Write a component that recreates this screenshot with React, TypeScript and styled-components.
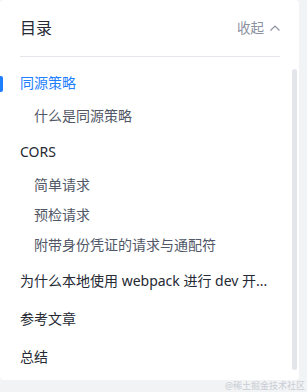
import styled, { createGlobalStyle } from "styled-components";

type CatalogItem = {
  title: string;
  active?: boolean;
  children?: string[];
};

const catalog: CatalogItem[] = [
  { title: "同源策略", active: true, children: ["什么是同源策略"] },
  {
    title: "CORS",
    children: ["简单请求", "预检请求", "附带身份凭证的请求与通配符"],
  },
  { title: "为什么本地使用 webpack 进行 dev 开..." },
  { title: "参考文章" },
  { title: "总结" },
];

const App = () => {
  return (
    <Page>
      <GlobalStyle />
      <Card>
        <Header>
          <Title>目录</Title>
          <Collapse>
            收起
            <svg width="10" height="6" viewBox="0 0 10 6" fill="none">
              <polyline
                points="0.5,5.5 5,1 9.5,5.5"
                stroke="#8a919f"
                strokeWidth="1.1"
              />
            </svg>
          </Collapse>
        </Header>
        <Body>
          <List>
            {catalog.map((item) => (
              <Item key={item.title}>
                <ItemTitle $active={item.active}>{item.title}</ItemTitle>
                {item.children && (
                  <SubList>
                    {item.children.map((child) => (
                      <SubItem key={child}>{child}</SubItem>
                    ))}
                  </SubList>
                )}
              </Item>
            ))}
          </List>
          <ScrollTrack>
            <ScrollThumb />
          </ScrollTrack>
        </Body>
      </Card>
      <Watermark>@稀土掘金技术社区</Watermark>
    </Page>
  );
};

const GlobalStyle = createGlobalStyle`
  html, body {
    margin: 0;
    padding: 0;
    background: #f2f3f5;
  }
  * {
    box-sizing: border-box;
  }
`;

const Page = styled.div`
  position: relative;
  width: 307px;
  height: 392px;
  background: #f2f3f5;
  font-family: "Noto Sans", "Noto Sans CJK SC", sans-serif;
  overflow: hidden;
`;

const Card = styled.div`
  width: 299px;
  height: 380px;
  background: #fff;
  border-radius: 4px;
  display: flex;
  flex-direction: column;
`;

const Header = styled.div`
  display: flex;
  justify-content: space-between;
  align-items: center;
  margin: 0 19px 0 20px;
  padding: 12px 0;
  border-bottom: 1px solid #e4e6eb;
`;

const Title = styled.div`
  font-size: 16px;
  line-height: 32px;
  color: #252933;
`;

const Collapse = styled.div`
  display: flex;
  align-items: center;
  gap: 6px;
  font-size: 13.5px;
  line-height: 32px;
  color: #8a919f;
`;

const Body = styled.div`
  flex: 1;
  display: flex;
  min-height: 0;
`;

const List = styled.ul`
  flex: 1;
  min-width: 0;
  list-style: none;
  margin: 0;
  padding: 7px 8px 0 0;
`;

const Item = styled.li`
  margin: 0;
`;

const ItemTitle = styled.div<{ $active?: boolean }>`
  position: relative;
  padding: 8px 0 8px 20px;
  font-size: 14px;
  line-height: 22px;
  color: ${(p) => (p.$active ? "#1e80ff" : "#252933")};
  white-space: nowrap;
  overflow: hidden;
  text-overflow: ellipsis;

  &::before {
    content: "";
    display: ${(p) => (p.$active ? "block" : "none")};
    position: absolute;
    left: 0;
    top: 12px;
    width: 3px;
    height: 16px;
    background: #1e80ff;
    border-radius: 0 2px 2px 0;
  }
`;

const SubList = styled.ul`
  list-style: none;
  margin: -1px 0 2px;
  padding: 0;
`;

const SubItem = styled.li`
  padding: 4px 0 4px 34px;
  font-size: 14px;
  line-height: 22px;
  color: #515767;
  white-space: nowrap;
  overflow: hidden;
  text-overflow: ellipsis;
`;

const ScrollTrack = styled.div`
  width: 5px;
  margin-right: 2px;
  padding: 12px 0 10px;
  display: flex;
`;

const ScrollThumb = styled.div`
  flex: 1;
  background: #e4e6eb;
  border-radius: 3px;
`;

const Watermark = styled.div`
  position: absolute;
  right: 2px;
  bottom: 1px;
  font-size: 9px;
  line-height: 11px;
  color: #c9cdd4;
`;

export default App;
